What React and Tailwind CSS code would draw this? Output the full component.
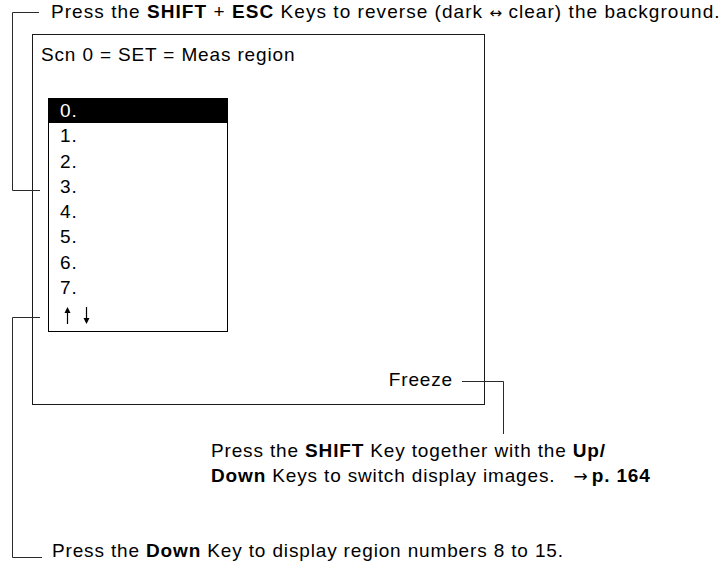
import React from "react";

const rows = ["0.", "1.", "2.", "3.", "4.", "5.", "6.", "7."];

function UpArrow() {
  return (
    <svg width="9" height="19" viewBox="0 0 9 19" className="inline-block" aria-hidden="true">
      <path d="M4.5 18V3" stroke="#000" strokeWidth="1.2" />
      <path d="M1.5 7L4.5 1L7.5 7Z" fill="#000" />
    </svg>
  );
}

function DownArrow() {
  return (
    <svg width="9" height="19" viewBox="0 0 9 19" className="inline-block" aria-hidden="true">
      <path d="M4.5 1V16" stroke="#000" strokeWidth="1.2" />
      <path d="M1.5 12L4.5 18L7.5 12Z" fill="#000" />
    </svg>
  );
}

export default function App() {
  return (
    <div className="relative w-[722px] h-[565px] overflow-hidden bg-white text-black font-['Liberation_Sans',Arial,sans-serif] tracking-[0.85px]">
      <p className="h-[34px] pl-[51px] text-[19px] leading-[24px] whitespace-nowrap tracking-[1.05px]">
        Press the <b>SHIFT</b> + <b>ESC</b> Keys to reverse (dark{" "}
        <span className="font-['DejaVu_Sans'] text-[15px] tracking-normal">↔</span> clear) the background.
      </p>

      <div className="ml-[32px] flex h-[371px] w-[453px] flex-col border border-[#1a1a1a] text-[19px]">
        <p className="pl-[8px] pt-[8px] leading-[24px] whitespace-nowrap">
          Scn 0 = SET = Meas region
        </p>
        <div className="ml-[15px] mt-[31px] h-[234px] w-[180px] border-x border-b border-black">
          {rows.map((r, i) => (
            <div
              key={r}
              className={
                "pl-[11px] leading-[25.3px] " +
                (i === 0 ? "bg-black text-white" : "")
              }
            >
              {r}
            </div>
          ))}
          <div className="flex items-center gap-[10px] pl-[14px] pt-[6px]">
            <UpArrow />
            <DownArrow />
          </div>
        </div>
        <p className="mt-auto self-end pb-[12px] pr-[31px] leading-[24px]">Freeze</p>
      </div>

      <div className="mt-[34px] pl-[211px] text-[19px] leading-[24.5px] whitespace-nowrap">
        <p>
          Press the <b>SHIFT</b> Key together with the <b>Up/</b>
        </p>
        <p>
          <b>Down</b> Keys to switch display images.
          <span className="pl-[18px] font-['DejaVu_Sans'] text-[17px] tracking-normal">→</span>
          <b className="pl-[4px]">p. 164</b>
        </p>
      </div>

      <p className="mt-[51px] pl-[52px] text-[19px] leading-[24px] whitespace-nowrap">
        Press the <b>Down</b> Key to display region numbers 8 to 15.
      </p>

      <svg
        className="pointer-events-none absolute inset-0"
        width="722"
        height="565"
        viewBox="0 0 722 565"
        fill="none"
        stroke="#2a2a2a"
        strokeWidth="1"
      >
        <path d="M39 12.5H12.5V190.5H40" />
        <path d="M40 317.5H12.5V557.5H42" />
        <path d="M462 381.5H503.5V434" />
      </svg>
    </div>
  );
}
